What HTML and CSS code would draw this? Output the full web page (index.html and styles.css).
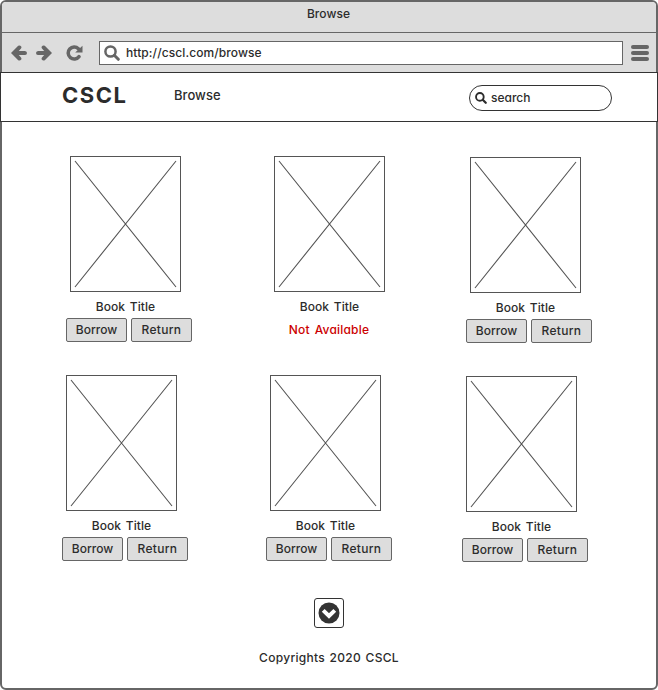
FILE: index.html
```html
<!DOCTYPE html>
<html lang="en">
<head>
<meta charset="utf-8">
<title>Browse</title>
<link rel="stylesheet" href="styles.css">
</head>
<body>
<svg class="defs" width="0" height="0">
  <symbol id="cross" viewBox="0 0 109 134"><path d="M4 4L105 130M105 4L4 130" fill="none" stroke="#555" stroke-width="1.1"/></symbol>
  <symbol id="arrow" viewBox="0 0 16 16"><path d="M0 8L7.2 .8Q9 -.2 10.2 1.4Q10.9 2.6 9.8 3.8L7.8 5.9H14Q16 6.2 16 8Q16 9.8 14 10.1H7.8L9.8 12.2Q10.9 13.4 10.2 14.6Q9 16.2 7.2 15.2Z" fill="#666"/></symbol>
  <symbol id="lens" viewBox="0 0 16 16"><circle cx="6.5" cy="6.5" r="5.1" fill="none" stroke="currentColor" stroke-width="2.5"/><path d="M10.3 10.3L14.3 14.3" stroke="currentColor" stroke-width="3" stroke-linecap="round"/></symbol>
</svg>
<div class="window">
  <div class="titlebar"><span>Browse</span></div>
  <div class="toolbar">
    <svg class="back" width="16" height="16"><use href="#arrow"/></svg>
    <svg class="forward" width="16" height="16"><use href="#arrow"/></svg>
    <svg class="reload" width="17" height="16" viewBox="0 0 17 16"><path d="M13 11.6A6 6 0 1 1 12.4 3.7" fill="none" stroke="#666" stroke-width="3.5" stroke-linecap="round"/><path d="M16.5 .8V7.6H9.2Z" fill="#666"/></svg>
    <div class="address"><svg width="16" height="16"><use href="#lens"/></svg><span>http://cscl.com/browse</span></div>
    <div class="menu"><i></i><i></i><i></i></div>
  </div>
  <header class="header">
    <div class="logo">CSCL</div>
    <nav>Browse</nav>
    <div class="search"><svg width="12" height="12" viewBox="0 0 16 16"><use href="#lens" width="16" height="16"/></svg><span>search</span></div>
  </header>
  <main>
    <section class="row first">
      <article class="card"><svg class="cover"><use href="#cross"/></svg><h3>Book Title</h3><div class="actions"><button>Borrow</button><button>Return</button></div></article>
      <article class="card"><svg class="cover"><use href="#cross"/></svg><h3>Book Title</h3><p class="unavailable">Not Available</p></article>
      <article class="card last"><svg class="cover"><use href="#cross"/></svg><h3>Book Title</h3><div class="actions"><button>Borrow</button><button>Return</button></div></article>
    </section>
    <section class="row">
      <article class="card"><svg class="cover"><use href="#cross"/></svg><h3>Book Title</h3><div class="actions"><button>Borrow</button><button>Return</button></div></article>
      <article class="card"><svg class="cover"><use href="#cross"/></svg><h3>Book Title</h3><div class="actions"><button>Borrow</button><button>Return</button></div></article>
      <article class="card last"><svg class="cover"><use href="#cross"/></svg><h3>Book Title</h3><div class="actions"><button>Borrow</button><button>Return</button></div></article>
    </section>
    <div class="more"><svg width="22" height="22" viewBox="0 0 22 22"><circle cx="11" cy="11" r="10.5" fill="#333"/><path d="M5.2 8.4L11 14L16.8 8.4" fill="none" stroke="#fff" stroke-width="4"/></svg></div>
  </main>
  <footer>Copyrights 2020 CSCL</footer>
</div>
</body>
</html>
```

FILE: styles.css
```css
* { box-sizing: border-box; }
body {
  margin: 0;
  background: #fff;
  color: #2c2c2c;
  font: 500 12px/16px Inter, "Liberation Sans", sans-serif;
  font-feature-settings: "cv11", "ss03";
}
.defs { display: block; height: 0; }
svg { display: block; flex: none; }
.window {
  width: 658px;
  height: 690px;
  display: flex;
  flex-direction: column;
  border: 2px solid #666;
  border-radius: 6px;
}
.titlebar {
  height: 31px;
  padding-top: 4px;
  text-align: center;
  background: #ddd;
  border-bottom: 1px solid #666;
  border-radius: 4px 4px 0 0;
  letter-spacing: .05px;
}
.titlebar span { margin-right: 1px; }
.toolbar {
  height: 39px;
  display: flex;
  align-items: center;
  padding: 0 7px 0 9px;
  background: #ddd;
}
.back { margin-right: 9px; }
.forward { transform: scaleX(-1); margin-right: 14px; }
.address {
  width: 524px;
  height: 24px;
  margin-left: 16px;
  margin-right: 8px;
  display: flex;
  align-items: center;
  gap: 6px;
  padding-left: 4px;
  background: #fff;
  border: 1px solid #666;
  letter-spacing: .1px;
}
.address svg { color: #666; }
.address span { padding-top: 1px; }
.menu { display: flex; flex-direction: column; gap: 2px; }
.menu i { width: 18px; height: 4px; background: #666; border-radius: 2px; }
.header {
  height: 50px;
  margin: 0 -2px;
  display: flex;
  background: #fff;
  border: 1px solid #333;
}
.logo { width: 111px; margin: 9px 0 0 61px; font-size: 22px; font-weight: 650; line-height: 26px; letter-spacing: 1.5px; }
nav { width: 296px; padding-top: 14px; margin-left: 1px; margin-right: -1px; font-size: 13px; letter-spacing: .05px; }
.search {
  width: 143px;
  height: 26px;
  margin-top: 12px;
  margin-left: 0;
  display: flex;
  align-items: center;
  gap: 4px;
  padding: 0 0 1px 5px;
  border: 1px solid #333;
  border-radius: 13px;
}
main { height: 506px; padding: 34px 0 0 64px; }
.row { display: grid; grid-template-columns: 204px 196px 126px; margin-left: -4px; height: 187px; }
.row.first { margin-left: 0; margin-bottom: 32px; }
.card.last { padding-top: 1px; }
.cover { width: 111px; height: 136px; margin-left: 4px; border: 1px solid #555; }
h3 { width: 111px; margin: 7px 0 3px 4px; font-size: 12px; font-weight: 500; line-height: 16px; text-align: center; word-spacing: 1.5px; letter-spacing: .06px; }
.actions { display: flex; gap: 4px; }
button {
  width: 61px;
  height: 24px;
  padding: 0 0 1px;
  color: inherit;
  font: inherit;
  font-feature-settings: inherit;
  background: #ddd;
  border: 1px solid #666;
  border-radius: 2px;
}
.actions button:last-child { letter-spacing: .3px; }
.unavailable { width: 111px; margin: 0 0 0 3.5px; line-height: 23px; text-align: center; color: #c00; letter-spacing: .2px; word-spacing: 1.5px; }
.more {
  width: 30px;
  height: 30px;
  margin: 36px 0 0 248px;
  display: flex;
  align-items: center;
  justify-content: center;
  border: 1px solid #333;
  border-radius: 3px;
}
footer { padding-top: 22px; text-align: center; letter-spacing: .3px; word-spacing: 1px; }
```
